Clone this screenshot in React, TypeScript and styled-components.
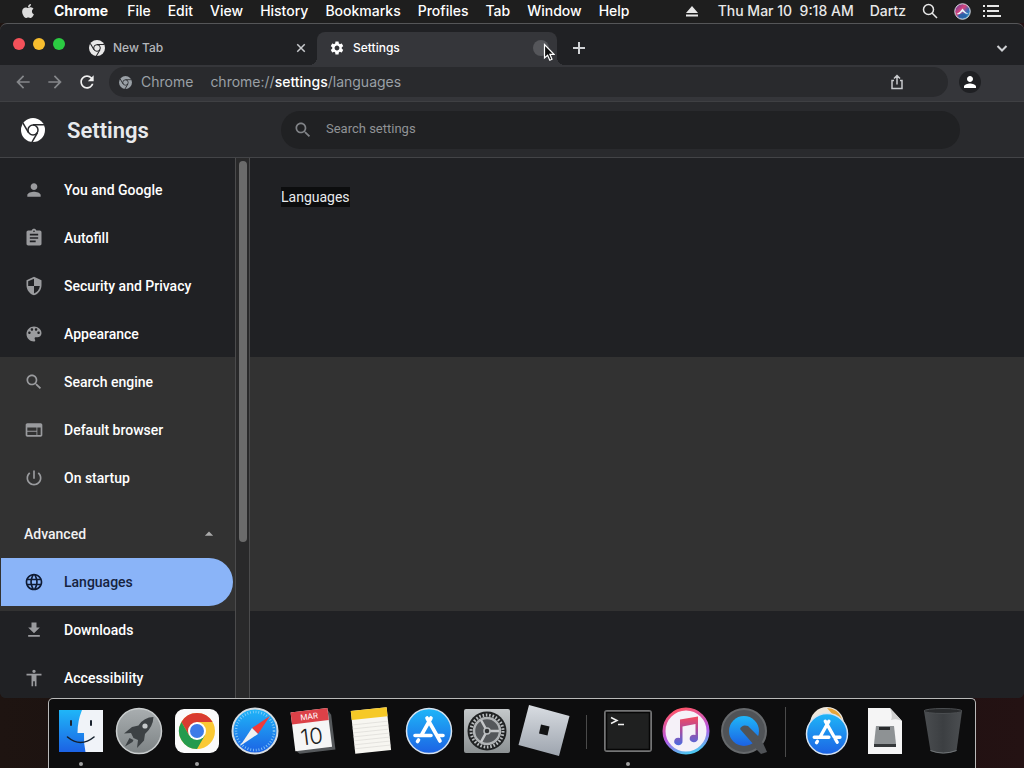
import React from "react";
import styled, { createGlobalStyle, css } from "styled-components";
import { FaApple } from "react-icons/fa";

const GlobalStyle = createGlobalStyle`
  *, *::before, *::after { box-sizing: border-box; }
  body { margin: 0; background: #180f10; color: #fff; font-family: Inter, "Liberation Sans", sans-serif; }
  button { font: inherit; color: inherit; background: none; border: 0; padding: 0; margin: 0; }
  svg { display: block; flex: none; }
`;

const Desktop = styled.div`
  height: 100vh;
  display: flex;
  flex-direction: column;
  overflow: hidden;
  background: linear-gradient(90deg, #1e1411, #150c0d 50%, #241213);
`;

/* ---------- menu bar ---------- */

const MenuBar = styled.header`
  flex: none;
  height: 23px;
  display: flex;
  align-items: center;
  justify-content: space-between;
  padding: 0 23px 1px 20px;
  background: #1e1e1e;
  font-size: 14px;
  font-weight: 500;
  line-height: 20px;
`;

const MenuGroup = styled.nav`
  display: flex;
  align-items: center;
  gap: 17px;
`;

const MenuButton = styled.button<{ $strong?: boolean }>`
  font-weight: ${(p) => (p.$strong ? 700 : 500)};
  padding: ${(p) => (p.$strong ? "0 2px 0 1px" : 0)};
  white-space: pre;
`;

const StatusGroup = styled.div`
  display: flex;
  align-items: center;
  gap: 16px;
  color: #e8e8e8;
`;

const StatusIcons = styled.div`
  display: flex;
  align-items: center;
  gap: 12px;
`;

const Clock = styled.time`
  white-space: pre;
  margin-left: 4px;
`;

/* ---------- browser window ---------- */

const BrowserWindow = styled.main`
  flex: 1;
  min-height: 0;
  display: flex;
  flex-direction: column;
  overflow: hidden;
  background: #202124;
  border-top: 1px solid #555658;
  border-radius: 7px 7px 6px 6px;
`;

const TabStrip = styled.div`
  flex: none;
  height: 41px;
  display: flex;
  align-items: flex-end;
  padding: 0 14px 0 13px;
  font-size: 12px;
`;

const WindowControls = styled.div`
  display: flex;
  align-self: center;
  gap: 8px;
  width: 64px;
  padding-bottom: 1px;
`;

const Light = styled.button<{ $color: string }>`
  width: 12px;
  height: 12px;
  border-radius: 50%;
  background: ${(p) => p.$color};
`;

const activeTab = css`
  position: relative;
  color: #fff;
  background: #35363a;
  &::before, &::after {
    content: "";
    position: absolute;
    bottom: 0;
    width: 8px;
    height: 8px;
  }
  &::before { right: 100%; background: radial-gradient(circle at 0 0, transparent 8px, #35363a 8px); }
  &::after { left: 100%; background: radial-gradient(circle at 100% 0, transparent 8px, #35363a 8px); }
`;

const Tab = styled.div<{ $active?: boolean }>`
  flex: none;
  width: 240px;
  height: 33px;
  display: flex;
  align-items: center;
  gap: 8px;
  padding: 0 8px 2px 12px;
  border-radius: 8px 8px 0 0;
  color: #b4b7bb;
  ${(p) => p.$active && activeTab}
`;

const TabTitle = styled.span`
  flex: 1;
  font-weight: 500;
`;

const RoundButton = styled.button<{ $hover?: boolean }>`
  width: 16px;
  height: 16px;
  display: grid;
  place-items: center;
  border-radius: 50%;
  color: #c8cacd;
  background: ${(p) => (p.$hover ? "#55565a" : "transparent")};
`;

const StripButton = styled.button`
  height: 33px;
  width: 16px;
  margin-left: 14px;
  padding-bottom: 2px;
  display: grid;
  place-items: center;
  color: #d0d2d5;
  &:last-child { margin-left: auto; }
`;

const Toolbar = styled.div`
  flex: none;
  height: 37px;
  display: flex;
  align-items: center;
  padding: 0 43px 2px 13px;
  background: #35363a;
  border-bottom: 1px solid #3f4043;
`;

const ToolButton = styled.button<{ $dim?: boolean }>`
  width: 18px;
  margin-right: 14px;
  display: grid;
  place-items: center;
  color: ${(p) => (p.$dim ? "#85878a" : "#f1f1f1")};
`;

const Omnibox = styled.div`
  flex: 1;
  height: 30px;
  display: flex;
  align-items: center;
  padding: 0 43px 0 10px;
  border-radius: 15px;
  background: #292a2d;
  color: #9aa0a6;
  font-size: 14px;
  line-height: 20px;
`;

const SiteChip = styled.button`
  display: flex;
  align-items: center;
  gap: 9px;
  margin-right: 17px;
`;

const Address = styled.div`
  flex: 1;
  white-space: nowrap;
  b { font-weight: 500; color: #fff; }
`;

const Avatar = styled.button`
  width: 22px;
  height: 22px;
  margin-left: 11px;
  display: grid;
  place-items: center;
  border-radius: 50%;
  background: #1f2023;
  color: #fff;
`;

/* ---------- settings page ---------- */

const SettingsHeader = styled.div`
  flex: none;
  height: 56px;
  display: flex;
  align-items: center;
  padding: 0 64px 0 21px;
  background: #292a2d;
  border-bottom: 1px solid #434447;
  font-family: Roboto, sans-serif;
`;

const PageTitle = styled.h1`
  width: 214px;
  margin: 0 0 0 22px;
  padding-top: 2px;
  font-size: 22px;
  line-height: 28px;
  font-weight: 600;
  color: #e8eaed;
`;

const SearchField = styled.label`
  flex: 1;
  height: 38px;
  display: flex;
  align-items: center;
  gap: 13px;
  padding: 0 12px;
  border-radius: 19px;
  background: #202123;
  color: #808387;
`;

const SearchInput = styled.input`
  flex: 1;
  min-width: 0;
  padding: 0 0 2px;
  border: 0;
  outline: 0;
  background: none;
  font: 13px/20px Roboto, sans-serif;
  color: #e8eaed;
  &::placeholder { color: #909396; opacity: 1; }
`;

const SettingsBody = styled.div`
  flex: 1;
  min-height: 0;
  display: flex;
  font-family: Roboto, sans-serif;
  font-size: 14px;
  background: linear-gradient(#202124 0 199px, #323232 199px 453px, #202124 453px);
`;

const SideNav = styled.nav`
  flex: none;
  width: 235px;
  padding-top: 8px;
  overflow: hidden;
`;

const navRow = css`
  height: 48px;
  display: flex;
  align-items: center;
  font-weight: 500;
  line-height: 20px;
`;

const NavLink = styled.a<{ $selected?: boolean }>`
  ${navRow}
  gap: 20px;
  margin: 0 2px 0 1px;
  padding-left: 23px;
  border-radius: 0 24px 24px 0;
  text-decoration: none;
  color: ${(p) => (p.$selected ? "#16233f" : "#fff")};
  background: ${(p) => (p.$selected ? "#8ab4f8" : "transparent")};
  svg { color: ${(p) => (p.$selected ? "#0e1a33" : "#9a9b9e")}; }
`;

const SectionToggle = styled.button`
  ${navRow}
  width: 100%;
  justify-content: space-between;
  margin-top: 8px;
  padding: 0 16px 0 24px;
  color: #f1f1f1;
  svg { color: #aaa; }
`;

const ScrollTrack = styled.div`
  flex: none;
  width: 15px;
  padding: 3px 2px 0 3px;
  background: #29292a;
  border: solid #4b4b4c;
  border-width: 0 1px;
`;

const ScrollThumb = styled.div`
  width: 8px;
  height: 71%;
  border-radius: 4px;
  background: #6b6b6b;
`;

const Content = styled.section`
  flex: 1;
  padding: 29px 31px;
`;

const SectionTitle = styled.h2`
  display: inline-block;
  margin: 0;
  font-size: 14px;
  line-height: 20px;
  font-weight: 400;
  color: #e8eaed;
  background: #0c0d0e;
`;

/* ---------- dock ---------- */

const Dock = styled.footer`
  flex: none;
  align-self: center;
  height: 70px;
  display: flex;
  padding: 8px 3px 0;
  background: #0d0d0e;
  border: 1px solid #b9b9b9;
  border-bottom: 0;
  border-radius: 5px 5px 0 0;
`;

const DockItem = styled.button<{ $running?: boolean }>`
  width: 58px;
  display: flex;
  flex-direction: column;
  align-items: center;
  gap: 7px;
  svg { overflow: visible; }
  &::after {
    content: "";
    width: 4px;
    height: 4px;
    border-radius: 50%;
    background: ${(p) => (p.$running ? "#a0a0a0" : "transparent")};
  }
`;

const DockDivider = styled.hr<{ $short?: boolean }>`
  width: 1px;
  height: ${(p) => (p.$short ? 34 : 50)}px;
  margin: ${(p) => (p.$short ? 8 : 0)}px 12px 0;
  border: 0;
  background: #4a4a4a;
`;

const Pointer = styled.svg`
  position: fixed;
  left: 543px;
  top: 43px;
`;

/* ---------- icons ---------- */

const Glyph = ({ d, size = 20 }: { d: string; size?: number }) => (
  <svg width={size} height={size} viewBox="0 0 24 24" fill="currentColor" aria-hidden="true">
    <path d={d} />
  </svg>
);

const paths = {
  person: "M12 12c2.21 0 4-1.79 4-4s-1.79-4-4-4-4 1.79-4 4 1.79 4 4 4zm0 2c-2.67 0-8 1.34-8 4v2h16v-2c0-2.66-5.33-4-8-4z",
  assignment: "M19 3h-4.18C14.4 1.84 13.3 1 12 1c-1.3 0-2.4.84-2.82 2H5c-1.1 0-2 .9-2 2v14c0 1.1.9 2 2 2h14c1.1 0 2-.9 2-2V5c0-1.1-.9-2-2-2zm-7 0c.55 0 1 .45 1 1s-.45 1-1 1-1-.45-1-1 .45-1 1-1zm2 14H7v-2h7v2zm3-4H7v-2h10v2zm0-4H7V7h10v2z",
  security: "M12 1L3 5v6c0 5.55 3.84 10.74 9 12 5.16-1.26 9-6.45 9-12V5l-9-4zm0 10.99h7c-.53 4.12-3.28 7.79-7 8.94V12H5V6.3l7-3.11v8.8z",
  palette: "M12 3c-4.97 0-9 4.03-9 9s4.03 9 9 9c.83 0 1.5-.67 1.5-1.5 0-.39-.15-.74-.39-1.01-.23-.26-.38-.61-.38-.99 0-.83.67-1.5 1.5-1.5H16c2.76 0 5-2.24 5-5 0-4.42-4.03-8-9-8zm-5.5 9c-.83 0-1.5-.67-1.5-1.5S5.67 9 6.5 9 8 9.67 8 10.5 7.33 12 6.5 12zm3-4C8.67 8 8 7.33 8 6.5S8.67 5 9.5 5s1.5.67 1.5 1.5S10.330 8 9.500 8zm5 0c-.83 0-1.500-.67-1.500-1.500S13.670 5 14.500 5s1.500.67 1.500 1.500S15.330 8 14.500 8zm3 4c-.83 0-1.500-.67-1.500-1.500S16.670 9 17.500 9s1.500.67 1.500 1.500-.67 1.500-1.500 1.500z",
  search: "M15.5 14h-.79l-.28-.27C15.410 12.590 16 11.110 16 9.500 16 5.910 13.090 3 9.500 3S3 5.910 3 9.500 5.910 16 9.500 16c1.610 0 3.090-.59 4.230-1.570l.27.28v.79l5 4.990L20.490 19l-4.990-5zm-6 0C7.010 14 5 11.990 5 9.500S7.010 5 9.500 5 14 7.010 14 9.500 11.990 14 9.500 14z",
  web: "M20 4H4c-1.100 0-1.990.9-1.990 2L2 18c0 1.100.9 2 2 2h16c1.100 0 2-.9 2-2V6c0-1.100-.9-2-2-2zm-5 14H4v-4h11v4zm0-5H4V9h11v4zm5 5h-4V9h4v9z",
  power: "M13 3h-2v10h2V3zm4.830 2.170l-1.420 1.420C17.990 7.860 19 9.810 19 12c0 3.870-3.130 7-7 7s-7-3.130-7-7c0-2.190 1.010-4.140 2.580-5.420L6.170 5.170C4.230 6.820 3 9.260 3 12c0 4.970 4.030 9 9 9s9-4.030 9-9c0-2.740-1.230-5.180-3.170-6.830z",
  language: "M11.990 2C6.470 2 2 6.480 2 12s4.470 10 9.990 10C17.520 22 22 17.520 22 12S17.520 2 11.990 2zm6.930 6h-2.950c-.32-1.250-.78-2.450-1.380-3.560 1.840.63 3.370 1.910 4.330 3.560zM12 4.040c.83 1.200 1.480 2.530 1.910 3.960h-3.820c.43-1.430 1.080-2.760 1.910-3.960zM4.260 14C4.100 13.360 4 12.690 4 12s.1-1.360.26-2h3.380c-.08.66-.14 1.320-.14 2 0 .68.06 1.340.14 2H4.260zm.82 2h2.950c.32 1.250.78 2.450 1.380 3.560-1.840-.63-3.370-1.900-4.330-3.560zm2.950-8H5.080c.96-1.660 2.490-2.930 4.330-3.560C8.810 5.550 8.350 6.750 8.030 8zM12 19.960c-.83-1.200-1.480-2.530-1.910-3.960h3.820c-.43 1.430-1.080 2.760-1.910 3.960zM14.340 14H9.660c-.09-.66-.16-1.320-.16-2 0-.68.07-1.350.16-2h4.680c.09.65.16 1.320.16 2 0 .68-.07 1.340-.16 2zm.25 5.560c.6-1.110 1.060-2.310 1.380-3.560h2.950c-.96 1.650-2.490 2.930-4.330 3.560zM16.360 14c.08-.66.14-1.320.14-2 0-.68-.06-1.340-.14-2h3.380c.16.64.26 1.310.26 2s-.1 1.360-.26 2h-3.380z",
  download: "M19 9h-4V3H9v6H5l7 7 7-7zM5 18v2h14v-2H5z",
  accessibility: "M12 2c1.100 0 2 .9 2 2s-.9 2-2 2-2-.9-2-2 .9-2 2-2zm9 7h-6v13h-2v-6h-2v6H9V9H3V7h18v2z",
  dropUp: "M7 14l5-5 5 5z",
  back: "M20 11H7.830l5.590-5.590L12 4l-8 8 8 8 1.410-1.410L7.830 13H20v-2z",
  forward: "M12 4l-1.410 1.410L16.170 11H4v2h12.170l-5.580 5.590L12 20l8-8z",
  refresh: "M17.650 6.350C16.200 4.900 14.210 4 12 4c-4.420 0-7.990 3.580-7.990 8s3.570 8 7.990 8c3.730 0 6.840-2.550 7.730-6h-2.080c-.82 2.330-3.040 4-5.650 4-3.310 0-6-2.690-6-6s2.690-6 6-6c1.660 0 3.140.69 4.220 1.780L13 11h7V4l-2.350 2.350z",
  gear: "M19.140 12.940c.04-.3.060-.61.060-.94 0-.32-.02-.64-.07-.94l2.030-1.580c.18-.14.23-.41.12-.61l-1.920-3.320c-.12-.22-.37-.29-.59-.22l-2.390.96c-.5-.38-1.030-.7-1.620-.94l-.36-2.540c-.04-.24-.24-.41-.48-.41h-3.840c-.24 0-.43.17-.47.41l-.36 2.540c-.59.24-1.130.57-1.620.94l-2.390-.96c-.22-.08-.47 0-.59.22L2.740 8.870c-.12.21-.08.47.12.61l2.030 1.580c-.05.3-.09.63-.09.94s.02.64.07.94l-2.030 1.580c-.18.14-.23.41-.12.61l1.920 3.320c.12.22.37.29.59.22l2.390-.96c.5.38 1.030.7 1.620.94l.36 2.540c.05.24.24.41.48.41h3.840c.24 0 .44-.17.47-.41l.36-2.540c.59-.24 1.130-.56 1.620-.94l2.390.96c.22.08.47 0 .59-.22l1.920-3.320c.12-.22.07-.47-.12-.61l-2.010-1.580zM12 15.600c-1.980 0-3.600-1.620-3.600-3.600s1.620-3.600 3.600-3.600 3.600 1.620 3.600 3.600-1.620 3.600-3.600 3.600z",
};

const Line = ({ d, size, width = 2 }: { d: string; size: number; width?: number }) => (
  <svg width={size} height={size} viewBox="0 0 16 16" fill="none" stroke="currentColor" strokeWidth={width} aria-hidden="true">
    <path d={d} />
  </svg>
);

const ChromeMark = ({ size, color, gap }: { size: number; color: string; gap: string }) => (
  <svg width={size} height={size} viewBox="0 0 24 24" aria-hidden="true">
    <circle cx="12" cy="12" r="12" fill={color} />
    <g stroke={gap} strokeWidth="1.500" fill="none">
      <path d="M12 6.800H23" />
      <path d="M12 6.800H23" transform="rotate(120 12 12)" />
      <path d="M12 6.800H23" transform="rotate(240 12 12)" />
      <circle cx="12" cy="12" r="5" />
    </g>
  </svg>
);

const SiriIcon = () => (
  <svg width="17" height="17" viewBox="0 0 34 34" aria-hidden="true">
    <defs>
      <linearGradient id="siri" x1="0" y1="0" x2="1" y2="1">
        <stop offset="0" stopColor="#4d3c9c" />
        <stop offset=".4" stopColor="#d8437d" />
        <stop offset=".65" stopColor="#3169b4" />
        <stop offset="1" stopColor="#39b9c9" />
      </linearGradient>
    </defs>
    <circle cx="17" cy="17" r="15.500" fill="url(#siri)" stroke="#d9dbe2" strokeWidth="2" />
    <path d="M5 22Q13 18 17 11Q22 19 29 22Q22 22 17 17Q11 24 5 22Z" fill="#e9f6fb" />
    <path d="M7 26Q17 16 27 26Q17 34 7 26" fill="#2a62a8" />
  </svg>
);

const art = { width: 48, height: 48, viewBox: "0 0 48 48", "aria-hidden": true } as const;

const AppStoreA = () => (
  <g stroke="#fff" strokeWidth="3.600" strokeLinecap="round" fill="none">
    <path d="M26 11L16.500 28M22 11L35 34M10 28.500H26M32 28.500H38M12.500 34.500L13.500 33" />
  </g>
);

const blueGradient = (id: string) => (
  <linearGradient id={id} x1="0" y1="0" x2="0" y2="1">
    <stop offset="0" stopColor="#1fb6f8" />
    <stop offset="1" stopColor="#1c62e4" />
  </linearGradient>
);

const Finder = () => (
  <svg {...art}>
    <defs>{blueGradient("finder")}</defs>
    <rect x="2" y="3" width="44" height="42" fill="#f0f3f8" />
    <path d="M2 3H25Q20.500 14 20.500 26H27Q26.500 36 28.500 45H2Z" fill="url(#finder)" />
    <path d="M14 14V18M34 14V18" stroke="#1a2330" strokeWidth="2" strokeLinecap="round" />
    <path d="M10.500 30Q23.500 41 37 30" fill="none" stroke="#15202d" strokeWidth="1.600" strokeLinecap="round" />
  </svg>
);

const Launchpad = () => (
  <svg {...art}>
    <defs>
      <linearGradient id="pad" x1="0" y1="0" x2="0" y2="1">
        <stop offset="0" stopColor="#a9aeb0" />
        <stop offset="1" stopColor="#7d8385" />
      </linearGradient>
    </defs>
    <circle cx="24" cy="24" r="22.500" fill="url(#pad)" stroke="#c9cdce" strokeWidth="1.500" />
    <path d="M38.500 10Q29 10 23.500 18.500L17 20L9 26.500L16 26L18.500 31L23 33L22 41L29 33.500L30 27Q38 20 38.500 10Z" fill="#3c4144" />
    <path d="M14.500 31L10 39.500L17.500 35L18.500 33Z" fill="#3c4144" />
    <circle cx="30" cy="19" r="2.600" fill="#c5c9cb" />
  </svg>
);

const ChromeApp = () => (
  <svg {...art}>
    <rect x="2" y="2" width="44" height="44" rx="9" fill="#fbfbfb" />
    <circle cx="24" cy="24" r="18" fill="#fbc934" />
    <path d="M8.400 15A18 18 0 0 1 39.600 15H24L16.200 28.500Z" fill="#d93b30" />
    <path d="M8.400 15A18 18 0 0 0 24 42L31.800 28.500H16.200Z" fill="#259b4e" />
    <circle cx="24" cy="24" r="9" fill="#fff" />
    <circle cx="24" cy="24" r="7" fill="#3e7be8" />
  </svg>
);

const Safari = () => (
  <svg {...art}>
    <defs>{blueGradient("safari")}</defs>
    <circle cx="24" cy="24" r="22.500" fill="url(#safari)" stroke="#d7dde2" strokeWidth="2" />
    <circle cx="24" cy="24" r="19" fill="none" stroke="#8fd0f8" strokeWidth="2.500" strokeDasharray=".8 2" />
    <path d="M39 9L21 21L24 24L27 27Z" fill="#f03a3a" />
    <path d="M9 39L21 21L27 27Z" fill="#f1f1f1" />
  </svg>
);

const Calendar = () => (
  <svg {...art}>
    <g transform="rotate(-7 24 24)">
      <path d="M5 5H41L44 10V45H8L5 42Z" fill="#55585b" />
      <rect x="4" y="3" width="37" height="39" fill="#f6f6f6" />
      <rect x="4" y="3" width="37" height="12" fill="#dc4148" />
      <text x="22" y="12" fill="#fff" fontSize="8" textAnchor="middle" fontFamily="Inter, sans-serif">MAR</text>
      <text x="22" y="37" fill="#222" fontSize="22" fontWeight="300" textAnchor="middle" fontFamily="Inter, sans-serif">10</text>
    </g>
  </svg>
);

const Notes = () => (
  <svg {...art}>
    <g transform="rotate(-6 24 24)">
      <rect x="6" y="2" width="36" height="43" fill="#f7f6f1" />
      <rect x="6" y="2" width="36" height="9" fill="#f6c927" />
      <path d="M6 16H42M6 20H42M6 24H42M6 28H42M6 32H42M6 36H42M6 40H42" stroke="#dddcd7" strokeWidth=".7" />
    </g>
  </svg>
);

const AppStore = () => (
  <svg {...art}>
    <defs>{blueGradient("store")}</defs>
    <circle cx="24" cy="24" r="22.500" fill="url(#store)" stroke="#d5e2f0" strokeWidth="1.500" />
    <AppStoreA />
  </svg>
);

const Preferences = () => (
  <svg {...art}>
    <defs>
      <linearGradient id="prefs" x1="0" y1="0" x2="0" y2="1">
        <stop offset="0" stopColor="#c4c8ca" />
        <stop offset="1" stopColor="#8c9193" />
      </linearGradient>
    </defs>
    <rect x="1" y="2" width="46" height="44" rx="2" fill="url(#prefs)" />
    <circle cx="24" cy="24" r="19.500" fill="#202223" />
    <circle cx="24" cy="24" r="16" fill="none" stroke="#b9bcbe" strokeWidth="3" strokeDasharray="1.600 1.750" />
    <circle cx="24" cy="24" r="13" fill="#54575a" stroke="#b0b3b5" strokeWidth="2.500" />
    <path d="M24 24L18 13M24 24H36M24 24L18 35" stroke="#c4c6c8" strokeWidth="2.500" />
    <circle cx="24" cy="24" r="3" fill="#303233" stroke="#b9bcbe" strokeWidth="1.500" />
  </svg>
);

const Roblox = () => (
  <svg {...art}>
    <defs>
      <linearGradient id="blox" x1="0" y1="0" x2="0" y2="1">
        <stop offset="0" stopColor="#d9dde2" />
        <stop offset="1" stopColor="#9da4ae" />
      </linearGradient>
    </defs>
    <path d="M8-2L48.500 9L38 49L-2.500 38Z" fill="url(#blox)" />
    <path d="M20 17.500L28.500 19.500L26.500 28.500L18 26.500Z" fill="#121314" />
  </svg>
);

const Terminal = () => (
  <svg {...art}>
    <rect x="1" y="4" width="46" height="40" rx="2" fill="#1f2020" stroke="#747576" strokeWidth="2" />
    <rect x="2.500" y="5.500" width="43" height="37" fill="none" stroke="#060606" strokeWidth="1.500" />
    <path d="M7 10.500L13 13.500L7 16.500M14 17.500H20" fill="none" stroke="#f1f1f1" strokeWidth="1.500" />
  </svg>
);

const Music = () => (
  <svg {...art}>
    <defs>
      <linearGradient id="ring" x1=".3" y1="0" x2=".6" y2="1">
        <stop offset="0" stopColor="#ff5468" />
        <stop offset=".6" stopColor="#b45be6" />
        <stop offset="1" stopColor="#4cc8f2" />
      </linearGradient>
      <linearGradient id="note" x1=".5" y1="0" x2=".5" y2="1">
        <stop offset="0" stopColor="#f54a5e" />
        <stop offset=".45" stopColor="#b04a9c" />
        <stop offset="1" stopColor="#4a6ce0" />
      </linearGradient>
    </defs>
    <circle cx="24" cy="24" r="22" fill="#f5f1f8" stroke="url(#ring)" strokeWidth="3" />
    <path d="M18 12.500L36 9.500V31A4.200 3.800 0 1 1 33.500 28V17L20.500 19.500V34A4.200 3.800 0 1 1 18 31Z" fill="url(#note)" />
  </svg>
);

const QuickTime = () => (
  <svg {...art}>
    <defs>{blueGradient("qt")}</defs>
    <circle cx="24" cy="24" r="22" fill="#505357" stroke="#66696c" strokeWidth="2" />
    <circle cx="24" cy="24" r="15" fill="url(#qt)" />
    <path d="M20 22Q22 17 28 19L40 31L34 38Z" fill="#505357" />
    <path d="M33 31L43 36L47 45L41 47L36 42Z" fill="#505357" />
  </svg>
);

const Downloads = () => (
  <svg {...art}>
    <defs>{blueGradient("stack")}</defs>
    <circle cx="24" cy="17" r="17" fill="#eee7dc" />
    <path d="M24 1A16 16 0 0 1 39 12L31 9Z" fill="#e7a53a" />
    <circle cx="24" cy="27" r="20.500" fill="url(#stack)" stroke="#d5e2f0" strokeWidth="1.500" />
    <g transform="translate(2 4) scale(.92)"><AppStoreA /></g>
  </svg>
);

const DiskImage = () => (
  <svg {...art}>
    <path d="M7 1H29L41 14V47H7Z" fill="#f5f5f5" />
    <path d="M29 1Q32 9 30 13Q36 11 41 14Z" fill="#cfcfcf" />
    <path d="M15 19H33L35 37V40H13V37Z" fill="#8e9294" />
    <path d="M18 20H29V23H18Z" fill="#292b2c" />
    <path d="M13 37H35V40H13Z" fill="#35383a" />
  </svg>
);

const Trash = () => (
  <svg {...art}>
    <defs>
      <linearGradient id="bin">
        <stop offset="0" stopColor="#4a4d50" />
        <stop offset=".5" stopColor="#3c3f42" />
        <stop offset="1" stopColor="#4b4e51" />
      </linearGradient>
    </defs>
    <path d="M5 4Q24 0 43 4L37.500 44Q24 49 11.500 44Z" fill="url(#bin)" />
    <ellipse cx="24" cy="4" rx="19" ry="2.500" fill="#292b2d" stroke="#4c4f52" />
    <path d="M11.500 43.500Q24 48.500 37.500 43.500" fill="none" stroke="#707477" />
  </svg>
);

/* ---------- data ---------- */

const menus = ["File", "Edit", "View", "History", "Bookmarks", "Profiles", "Tab", "Window", "Help"];

const basicPages: [string, string][] = [
  ["You and Google", paths.person],
  ["Autofill", paths.assignment],
  ["Security and Privacy", paths.security],
  ["Appearance", paths.palette],
  ["Search engine", paths.search],
  ["Default browser", paths.web],
  ["On startup", paths.power],
];

const advancedPages: [string, string][] = [
  ["Languages", paths.language],
  ["Downloads", paths.download],
  ["Accessibility", paths.accessibility],
];

type DockApp = { name: string; Art: React.ComponentType; running?: boolean };

const dockGroups: DockApp[][] = [
  [
    { name: "Finder", Art: Finder, running: true },
    { name: "Launchpad", Art: Launchpad },
    { name: "Chrome", Art: ChromeApp, running: true },
    { name: "Safari", Art: Safari },
    { name: "Calendar", Art: Calendar },
    { name: "Notes", Art: Notes },
    { name: "App Store", Art: AppStore },
    { name: "System Preferences", Art: Preferences },
    { name: "Roblox", Art: Roblox },
  ],
  [
    { name: "Terminal", Art: Terminal, running: true },
    { name: "iTunes", Art: Music },
    { name: "QuickTime Player", Art: QuickTime },
  ],
  [
    { name: "Applications", Art: Downloads },
    { name: "Disk image", Art: DiskImage },
    { name: "Trash", Art: Trash },
  ],
];

const NavItem = ({ label, icon, selected }: { label: string; icon: string; selected?: boolean }) => (
  <NavLink href={`#${label.toLowerCase().replace(/ /g, "-")}`} $selected={selected} aria-current={selected ? "page" : undefined}>
    <Glyph d={icon} />
    {label}
  </NavLink>
);

export default function App() {
  return (
    <Desktop>
      <GlobalStyle />
      <MenuBar>
        <MenuGroup aria-label="Menu bar">
          <MenuButton aria-label="Apple"><FaApple size={16} color="#dcdcdc" /></MenuButton>
          <MenuButton $strong>Chrome</MenuButton>
          {menus.map((m) => <MenuButton key={m}>{m}</MenuButton>)}
        </MenuGroup>
        <StatusGroup>
          <MenuButton aria-label="Eject">
            <svg width="12" height="12" viewBox="0 0 12 12" fill="currentColor"><path d="M6 1L12 8H0ZM0 9.500H12V11.500H0Z" /></svg>
          </MenuButton>
          <Clock>Thu Mar 10  9:18 AM</Clock>
          <MenuButton>Dartz</MenuButton>
          <MenuButton aria-label="Spotlight">
            <Line size={16} width={1.5} d="M11.500 6.500A5 5 0 1 1 1.500 6.500A5 5 0 1 1 11.500 6.500M10 10L15 15" />
          </MenuButton>
          <StatusIcons>
            <MenuButton aria-label="Siri"><SiriIcon /></MenuButton>
            <MenuButton aria-label="Notification Center">
              <svg width="18" height="12" viewBox="0 0 18 12" fill="currentColor"><path d="M0 0H2V2H0ZM4 0H16V2H4ZM0 5H2V7H0ZM4 5H16V7H4ZM0 10H2V12H0ZM4 10H18V12H4Z" /></svg>
            </MenuButton>
          </StatusIcons>
        </StatusGroup>
      </MenuBar>

      <BrowserWindow>
        <TabStrip>
          <WindowControls>
            <Light $color="#f4515a" aria-label="Close window" />
            <Light $color="#f7bd2e" aria-label="Minimize window" />
            <Light $color="#2bcb42" aria-label="Zoom window" />
          </WindowControls>
          <Tab>
            <ChromeMark size={16} color="#e8e8e8" gap="#202124" />
            <TabTitle>New Tab</TabTitle>
            <RoundButton aria-label="Close New Tab"><Line size={12} d="M3 3L13 13M13 3L3 13" /></RoundButton>
          </Tab>
          <Tab $active>
            <Glyph d={paths.gear} size={16} />
            <TabTitle>Settings</TabTitle>
            <RoundButton $hover aria-label="Close Settings" />
          </Tab>
          <StripButton aria-label="New tab"><Line size={16} d="M8 2V14M2 8H14" /></StripButton>
          <StripButton aria-label="Search tabs"><Line size={16} d="M3.500 6L8 10.500L12.500 6" /></StripButton>
        </TabStrip>

        <Toolbar>
          <ToolButton $dim aria-label="Back"><Glyph d={paths.back} /></ToolButton>
          <ToolButton $dim aria-label="Forward"><Glyph d={paths.forward} /></ToolButton>
          <ToolButton aria-label="Reload"><Glyph d={paths.refresh} /></ToolButton>
          <Omnibox>
            <SiteChip>
              <ChromeMark size={13} color="#9aa0a6" gap="#292a2d" />
              Chrome
            </SiteChip>
            <Address role="textbox" aria-label="Address" tabIndex={0}>chrome://<b>settings</b>/languages</Address>
            <RoundButton aria-label="Share"><Line size={16} width={1.5} d="M5 6.500H3V14.500H13V6.500H11M8 10.500V2M5 4.500L8 1.500L11 4.500" /></RoundButton>
          </Omnibox>
          <Avatar aria-label="Profile"><Glyph d={paths.person} size={18} /></Avatar>
        </Toolbar>

        <SettingsHeader>
          <ChromeMark size={24} color="#fff" gap="#292a2d" />
          <PageTitle>Settings</PageTitle>
          <SearchField>
            <Glyph d={paths.search} />
            <SearchInput type="search" placeholder="Search settings" aria-label="Search settings" />
          </SearchField>
        </SettingsHeader>

        <SettingsBody>
          <SideNav aria-label="Settings">
            {basicPages.map(([label, icon]) => <NavItem key={label} label={label} icon={icon} />)}
            <SectionToggle aria-expanded="true">Advanced<Glyph d={paths.dropUp} /></SectionToggle>
            {advancedPages.map(([label, icon]) => (
              <NavItem key={label} label={label} icon={icon} selected={label === "Languages"} />
            ))}
          </SideNav>
          <ScrollTrack><ScrollThumb /></ScrollTrack>
          <Content><SectionTitle>Languages</SectionTitle></Content>
        </SettingsBody>
      </BrowserWindow>

      <Dock>
        {dockGroups.map((group, i) => (
          <React.Fragment key={i}>
            {i > 0 && <DockDivider $short={i === 1} />}
            {group.map(({ name, Art, running }) => (
              <DockItem key={name} aria-label={name} $running={running}><Art /></DockItem>
            ))}
          </React.Fragment>
        ))}
      </Dock>

      <Pointer width="12" height="19" viewBox="0 0 12 19" aria-hidden="true">
        <path d="M1.500 1.500V15L4.600 12.200L6.800 17.300L9 16.300L6.900 11.300H11Z" fill="#111" stroke="#fff" strokeWidth="1.200" />
      </Pointer>
    </Desktop>
  );
}
